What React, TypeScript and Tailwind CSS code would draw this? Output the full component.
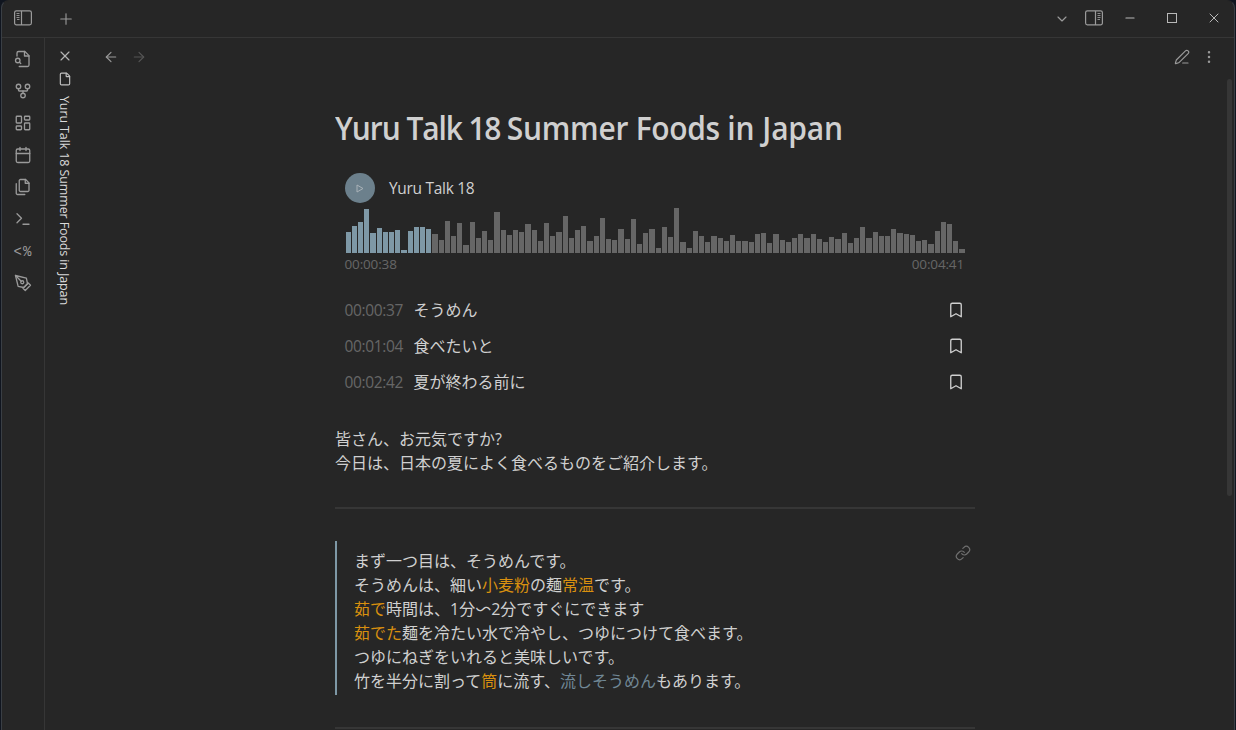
import React from "react";
import {
  ArrowLeft,
  ArrowRight,
  Bookmark,
  Calendar,
  ChevronDown,
  EllipsisVertical,
  File,
  GitFork,
  LayoutDashboard,
  Link,
  Minus,
  PenLine,
  Plus,
  Terminal,
  X,
} from "lucide-react";

const LATIN = "font-['Open_Sans','Noto_Sans_CJK_JP',sans-serif]";

const HEIGHTS = [
  21, 27, 31, 44, 20, 25, 21, 21, 23, 3, 22, 26, 26, 24, 19, 13, 32, 17, 30, 8,
  31, 15, 22, 13, 41, 23, 18, 23, 21, 29, 23, 12, 30, 17, 21, 37, 15, 23, 27, 12,
  17, 35, 14, 13, 24, 14, 34, 9, 20, 24, 5, 26, 16, 45, 11, 5, 22, 17, 11, 17,
  15, 12, 18, 12, 12, 11, 19, 20, 10, 19, 13, 11, 15, 19, 15, 19, 14, 11, 16, 14,
  20, 10, 15, 26, 15, 21, 17, 17, 24, 20, 19, 18, 12, 13, 9, 22, 31, 29, 12, 4,
];
const PLAYED = 14;

function Waveform() {
  return (
    <svg width="620" height="45" className="ml-[11px] block" shapeRendering="crispEdges">
      {HEIGHTS.map((h, i) => {
        const left = Math.floor((i * 62) / 10);
        const right = Math.floor((i * 62 + 52) / 10);
        return (
          <rect
            key={i}
            x={left}
            y={45 - h}
            width={right - left}
            height={h}
            fill={i < PLAYED ? "#7e98a6" : "#666666"}
          />
        );
      })}
    </svg>
  );
}

function PanelIcon({ right = false }: { right?: boolean }) {
  return (
    <svg width="18" height="16" viewBox="0 0 18 16" fill="none" stroke="currentColor" className={right ? "-scale-x-100" : ""}>
      <rect x="0.6" y="0.8" width="16.8" height="14" rx="1.8" strokeWidth="1.2" />
      <path d="M7.5 1v14" strokeWidth="1.2" />
      <path d="M2.5 3.5h3M2.5 5.5h3M2.5 7.5h3M3 9.5h2.5" strokeWidth="0.9" />
    </svg>
  );
}

function Glyph({ children }: { children: React.ReactNode }) {
  return (
    <svg width="18" height="18" viewBox="0 0 24 24" fill="none" stroke="currentColor" strokeWidth="1.75" strokeLinecap="round" strokeLinejoin="round">
      {children}
    </svg>
  );
}

function FileSearchIcon() {
  return (
    <Glyph>
      <path d="M4 8V4a2 2 0 0 1 2-2h8.5L20 7.500V20a2 2 0 0 1-2 2H7" />
      <path d="M14 2v6h6" />
      <circle cx="5" cy="14" r="3" />
      <path d="m9 18-1.700-1.700" />
    </Glyph>
  );
}

function FilesIcon() {
  return (
    <Glyph>
      <path d="M15.5 2H8.6c-.4 0-.8.2-1.1.5-.3.3-.5.7-.5 1.1v12.8c0 .4.2.8.5 1.1.3.3.7.5 1.1.5h9.8c.4 0 .8-.2 1.1-.5.3-.3.5-.7.5-1.1V6.500L15.5 2z" />
      <path d="M3 7.6v12.8c0 .4.2.8.5 1.1.3.3.7.5 1.1.5h9.8" />
      <path d="M15 2v5h5" />
    </Glyph>
  );
}

function PenNibIcon() {
  return (
    <Glyph>
      <path d="m12 19 7-7 3 3-7 7-3-3z" />
      <path d="m18 13-1.500-7.500L2 2l3.500 14.500L13 18l5-5z" />
      <path d="m2 2 7.586 7.586" />
      <circle cx="11" cy="11" r="2" />
    </Glyph>
  );
}

function Ribbon() {
  const p = { size: 18, strokeWidth: 1.75 };
  return (
    <nav className="flex w-[43px] shrink-0 flex-col items-center border-r border-[#363636] pt-[5px] text-[#9a9a9a]">
      {[
        <FileSearchIcon key="search" />,
        <GitFork key="graph" {...p} />,
        <LayoutDashboard key="canvas" {...p} />,
        <Calendar key="calendar" {...p} />,
        <FilesIcon key="files" />,
        <Terminal key="terminal" {...p} />,
        <span key="template" className="pt-[2px] font-['Liberation_Mono',monospace] text-[14px] tracking-[1px]">&lt;%</span>,
        <PenNibIcon key="pen" />,
      ].map((icon, i) => (
        <div key={i} className="flex h-8 items-center justify-center">
          {icon}
        </div>
      ))}
    </nav>
  );
}

function Chapter({ time, label }: { time: string; label: string }) {
  return (
    <div className="flex h-9 items-center pr-[10px] pl-[9.500px]">
      <span className="w-[69px] text-[15.500px] tracking-[-0.350px] text-[#666666]">{time}</span>
      <span className="flex-1">{label}</span>
      <Bookmark size={18} strokeWidth={1.75} />
    </div>
  );
}

function Hl({ children }: { children: React.ReactNode }) {
  return <span className="text-[#d9900f]">{children}</span>;
}

export default function App() {
  return (
    <div className={`${LATIN} h-[730px] w-[1236px] overflow-hidden bg-[#10151f] pr-px pl-px text-[#d0d0d0]`}>
      <div className="flex h-full flex-col rounded-t-lg border-x border-t border-[#3a3f45] border-t-[#262626] bg-[#262626]">
        <header className="flex h-[37px] shrink-0 items-center border-b border-[#363636] pb-[2px] pl-3 text-[#9a9a9a]">
          <PanelIcon />
          <Plus size={18} strokeWidth={1.5} className="mt-px ml-[25px]" />
          <div className="flex-1" />
          <ChevronDown size={16} strokeWidth={1.75} className="mt-px mr-[15px]" />
          <PanelIcon right />
          <Minus size={14} strokeWidth={1.8} className="ml-5 text-[#b8b8b8]" />
          <div className="ml-[30px] h-[10px] w-[10px] border border-[#b8b8b8]" />
          <X size={16} strokeWidth={1.5} className="mr-3 ml-[29px] text-[#b8b8b8]" />
        </header>
        <div className="flex min-h-0 flex-1">
          <Ribbon />
          <div className="flex w-[40px] shrink-0 flex-col items-center pt-[10px]">
            <X size={16} strokeWidth={1.75} className="text-[#b3b3b3]" />
            <File size={14} strokeWidth={2} className="mt-2 text-[#c0c0c0]" />
            <div className="mt-[10px] mr-[2px] text-[12.500px] leading-[18px] tracking-[-0.120px] whitespace-nowrap text-[#dadada] [writing-mode:vertical-rl]">
              Yuru Talk 18 Summer Foods in Japan
            </div>
          </div>
          <main className="flex min-w-0 flex-1 flex-col">
            <div className="flex h-10 shrink-0 items-center pr-[17px] pb-[2px] pl-[18px] text-[#9a9a9a]">
              <ArrowLeft size={16} strokeWidth={1.75} />
              <ArrowRight size={16} strokeWidth={1.75} className="ml-3 text-[#555555]" />
              <div className="flex-1" />
              <PenLine size={16} strokeWidth={1.75} />
              <EllipsisVertical size={16} strokeWidth={1.75} className="ml-[11px]" />
            </div>
            <div className="flex min-h-0 flex-1">
              <div className="ml-[250px] w-[640px] shrink-0 text-[16px] leading-6">
                <h1 className="mt-[30px] origin-left scale-x-[0.937] text-[32px] leading-[40px] font-semibold whitespace-nowrap">
                  <span className="tracking-[-1.100px]">Yuru </span>
                  <span className="tracking-[-1.200px]">Talk </span>
                  <span className="tracking-[-1.400px]">18 </span>
                  <span className="tracking-[-0.250px]">Summer </span>
                  <span className="tracking-[-0.400px]">Foods </span>
                  <span className="tracking-[0px]">in </span>
                  <span className="tracking-[-0.200px]">Japan</span>
                </h1>
                <div className="mt-[25px] flex h-[30px] items-center pl-[10px]">
                  <div className="flex h-[30px] w-[30px] items-center justify-center rounded-full bg-[#6c808c] text-[#a9b2b8]">
                    <svg width="8" height="9" viewBox="0 0 8 9" fill="none" stroke="currentColor" strokeLinejoin="round">
                      <path d="M1 1l6 3.500L1 8z" />
                    </svg>
                  </div>
                  <span className="ml-[14px] text-[15.500px] tracking-[-0.300px]">Yuru Talk 18</span>
                </div>
                <div className="mt-[5px]">
                  <Waveform />
                </div>
                <div className="flex h-[22px] items-center justify-between pr-[11px] pl-[9.500px] text-[13.500px] tracking-[-0.150px] text-[#666666]">
                  <span>00:00:38</span>
                  <span>00:04:41</span>
                </div>
                <div className="mt-[17px]">
                  <Chapter time="00:00:37" label="そうめん" />
                  <Chapter time="00:01:04" label="食べたいと" />
                  <Chapter time="00:02:42" label="夏が終わる前に" />
                </div>
                <p className="mt-[27px]">
                  皆さん、お元気ですか?
                  <br />
                  今日は、日本の夏によく食べるものをご紹介します。
                </p>
                <div className="mt-8 h-[2px] bg-[#363636]" />
                <div className="mt-8 flex h-[154px] border-l-2 border-[#7e98a6] pt-2 pl-[17px] whitespace-nowrap">
                  <p className="flex-1">
                    まず一つ目は、そうめんです。
                    <br />
                    そうめんは、細い<Hl>小麦粉</Hl>の麺<Hl>常温</Hl>です。
                    <br />
                    <Hl>茹で</Hl>時間は、1分<span className="inline-block -scale-y-100 leading-4">〜</span>2分ですぐにできます
                    <br />
                    <Hl>茹でた</Hl>麺を冷たい水で冷やし、つゆにつけて食べます。
                    <br />
                    つゆにねぎをいれると美味しいです。
                    <br />
                    竹を半分に割って<Hl>筒</Hl>に流す、<span className="text-[#718896]">流しそうめん</span>もあります。
                  </p>
                  <Link size={16} strokeWidth={1.75} className="mt-[-4px] mr-1 text-[#707070]" />
                </div>
                <div className="mt-8 h-[2px] bg-[#363636]" />
              </div>
              <div className="flex-1" />
              <div className="mt-[1px] mr-[2px] h-[417px] w-[5px] rounded-full bg-[#363636]" />
            </div>
          </main>
        </div>
      </div>
    </div>
  );
}
